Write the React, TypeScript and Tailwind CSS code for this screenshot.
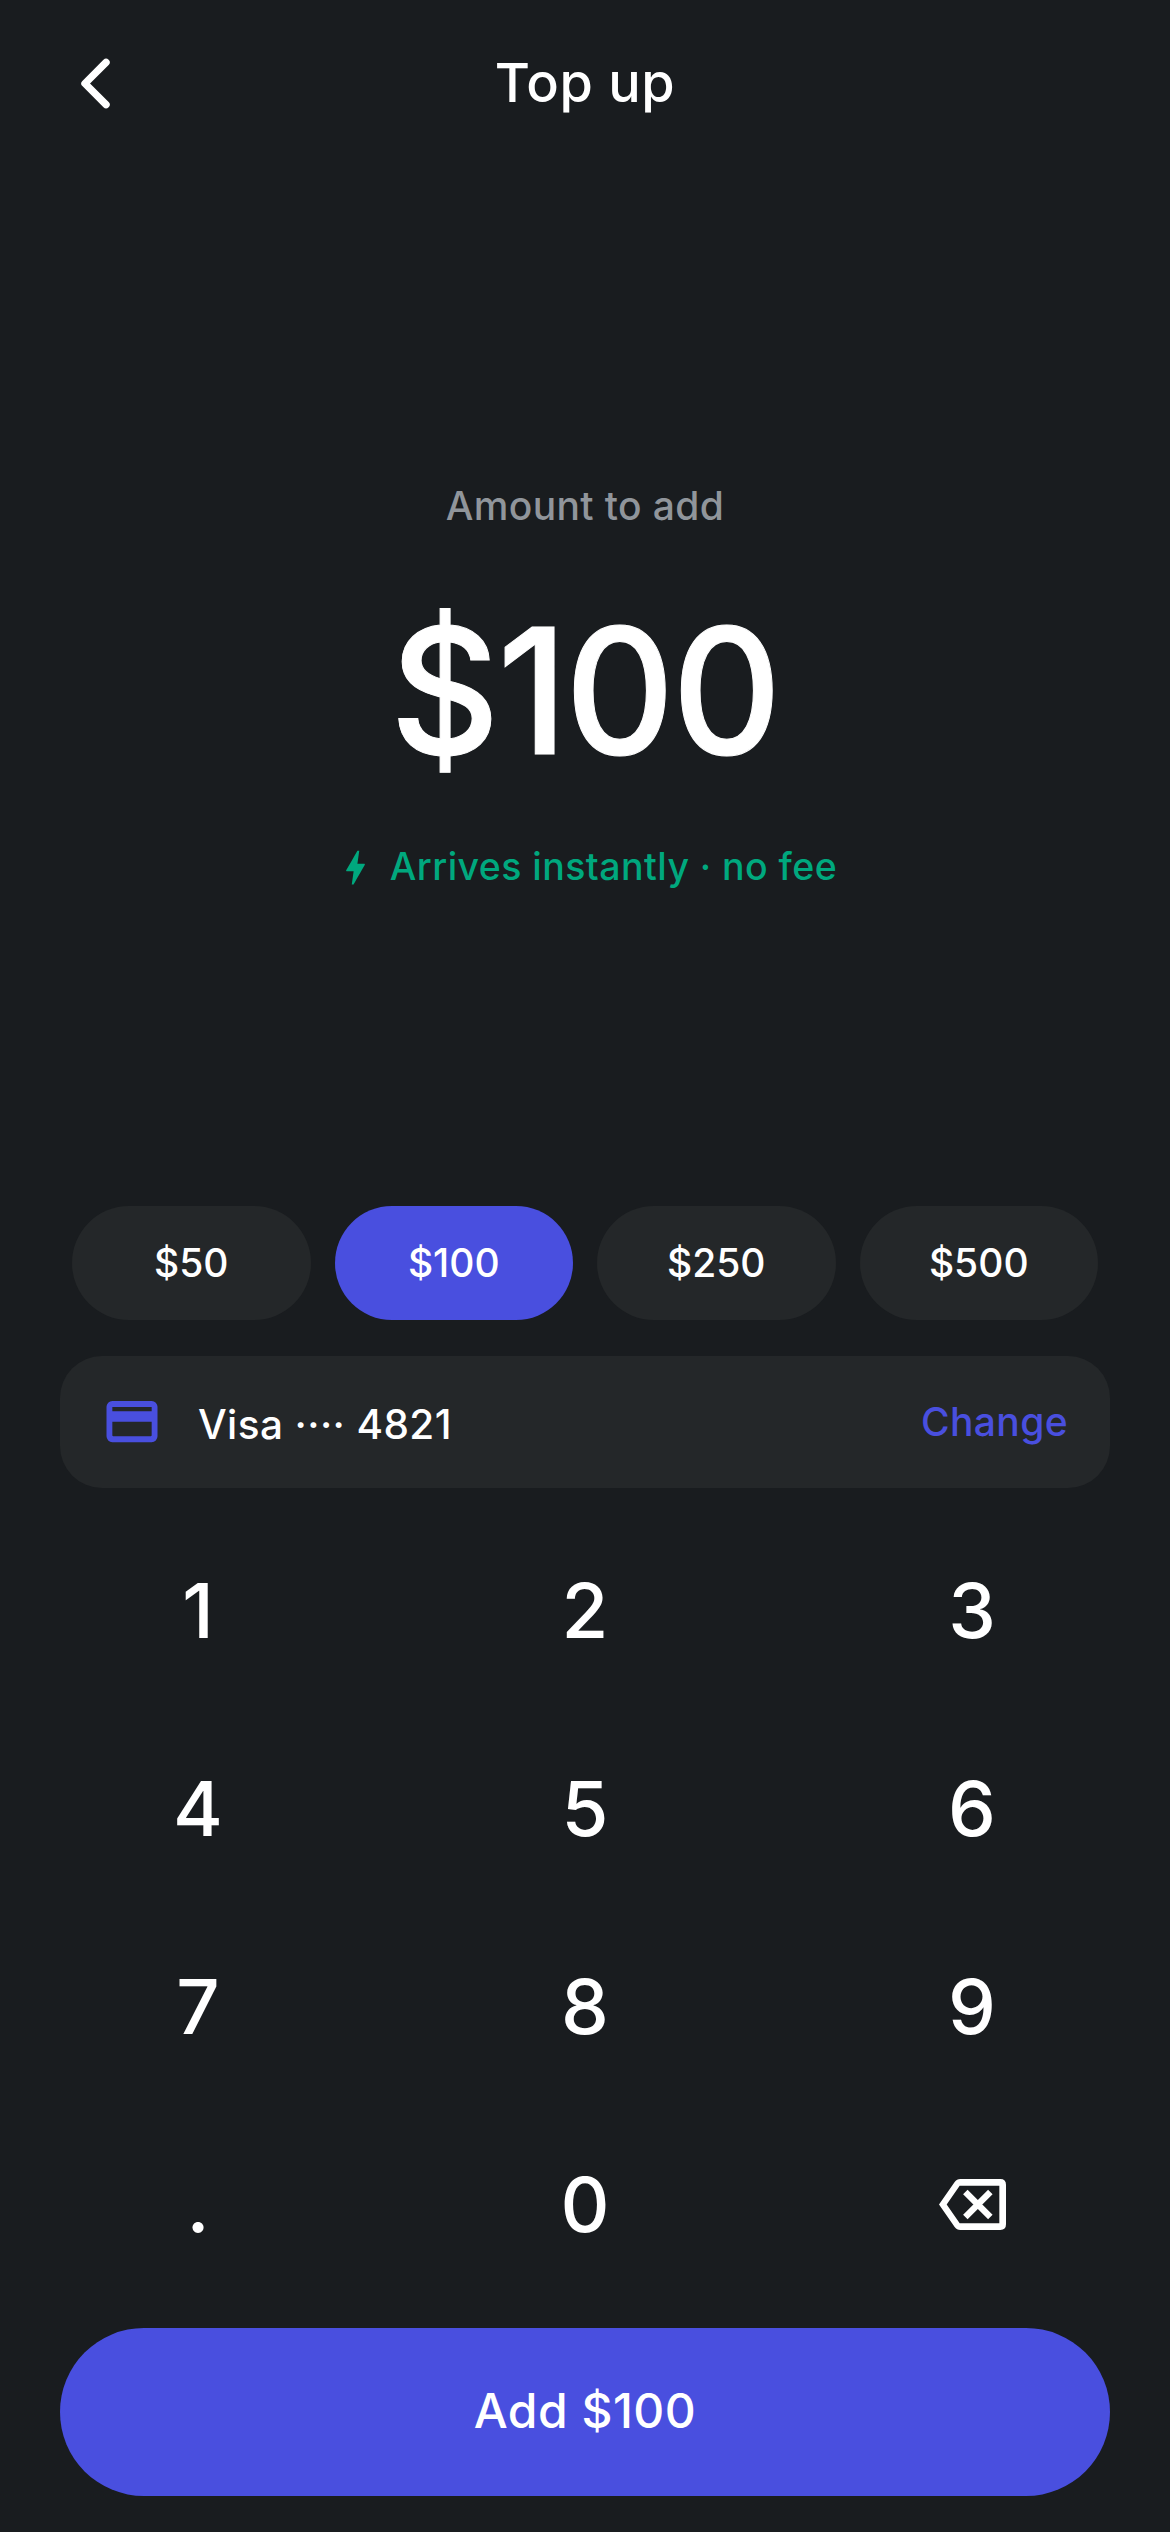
const presets = ["$50", "$100", "$250", "$500"];
const keys = ["1", "2", "3", "4", "5", "6", "7", "8", "9", ".", "0"];

function ChevronLeft() {
  return (
    <svg className="size-[75px]" viewBox="0 0 512 512" fill="none" stroke="currentColor" strokeWidth="50" strokeLinecap="round" strokeLinejoin="round">
      <path d="M328 112 184 256l144 144" />
    </svg>
  );
}

function Bolt() {
  return (
    <svg className="size-[45px]" viewBox="0 0 24 24" fill="currentColor">
      <path d="M11 21h-1l1-7H7.5c-.88 0-.33-.75-.31-.78C8.48 10.94 10.42 7.54 13.01 3h1l-1 7h3.51c.4 0 .62.19.4.66C12.97 17.55 11 21 11 21z" />
    </svg>
  );
}

function Card() {
  return (
    <svg className="size-[60px]" viewBox="0 0 180 180" fill="currentColor" fillRule="evenodd">
      <path d="M31 27H149a17.500 17.500 0 0 1 17.500 17.500V133a17.500 17.500 0 0 1-17.500 17.500H31A17.500 17.500 0 0 1 13.500 133V44.500A17.500 17.500 0 0 1 31 27ZM31 45V58H149V45ZM31 89.500V130q0 3 3 3H146q3 0 3-3V89.500Z" />
    </svg>
  );
}

function Backspace() {
  return (
    <svg className="h-[51px] w-[67px]" viewBox="0 0 201 153" fill="currentColor">
      <path fillRule="evenodd" d="M0 76.500 47 9Q53 0 64 0H184Q201 0 201 17V136Q201 153 184 153H64Q53 153 47 144ZM23 76.500 62 133H181V20H62Z" />
      <path d="M79 39 154 114M154 39 79 114" stroke="currentColor" strokeWidth="19" />
    </svg>
  );
}

export default function App() {
  return (
    <div className="flex h-[2532px] w-[1170px] flex-col bg-[#191c1f] px-[60px] pb-9 font-['Inter',sans-serif] font-medium text-white">
      <header className="grid h-[168px] shrink-0 grid-cols-[75px_1fr_75px] items-center">
        <button className="-ml-0.5 pb-0.5">
          <ChevronLeft />
        </button>
        <h1 className="pb-0.5 text-center text-[54px] leading-[66px] tracking-[0.01em]">Top up</h1>
      </header>

      <section className="flex flex-1 flex-col items-center justify-center">
        <p className="text-[39px] leading-[48px] tracking-[0.01em] text-[#90959b]">Amount to add</p>
        <p className="mt-[72px] scale-x-[0.97] text-[175px] leading-[176px] tracking-[-0.015em] [-webkit-text-stroke:1px_white]">
          $100
        </p>
        <p className="mt-[65px] flex items-center gap-3 text-[37.5px] leading-[48px] tracking-[0.44px] text-[#00a87e]">
          <Bolt />
          <span className="pb-0.5">Arrives instantly · no fee</span>
        </p>
      </section>

      <div className="grid shrink-0 grid-cols-4 gap-6 px-3">
        {presets.map((p) => (
          <button
            key={p}
            className={
              p === "$100"
                ? "h-[114px] rounded-full bg-[#494fdf] text-[39px]"
                : "h-[114px] rounded-full bg-[#242729] text-[39px]"
            }
          >
            {p}
          </button>
        ))}
      </div>

      <div className="mt-9 flex h-[132px] shrink-0 items-center rounded-[42px] bg-[#242729] px-[42px]">
        <span className="text-[#494fdf]">
          <Card />
        </span>
        <span className="ml-9 flex-1 pt-[5px] text-[40.5px] leading-[50px] tracking-[0.01em]">Visa ···· 4821</span>
        <button className="text-[39px] tracking-[0.01em] text-[#494fdf]">Change</button>
      </div>

      <div className="mt-6 grid shrink-0 grid-cols-[276px_276px_276px] justify-between">
        {keys.map((k) => (
          <button key={k} className="h-[198px] pb-0.5 text-[76px]">
            {k}
          </button>
        ))}
        <button className="flex h-[198px] items-center justify-center pb-px">
          <Backspace />
        </button>
      </div>

      <button className="mt-6 h-[168px] shrink-0 rounded-full bg-[#494fdf] pb-0.5 text-[48px] tracking-[0.01em]">
        Add $100
      </button>
    </div>
  );
}
